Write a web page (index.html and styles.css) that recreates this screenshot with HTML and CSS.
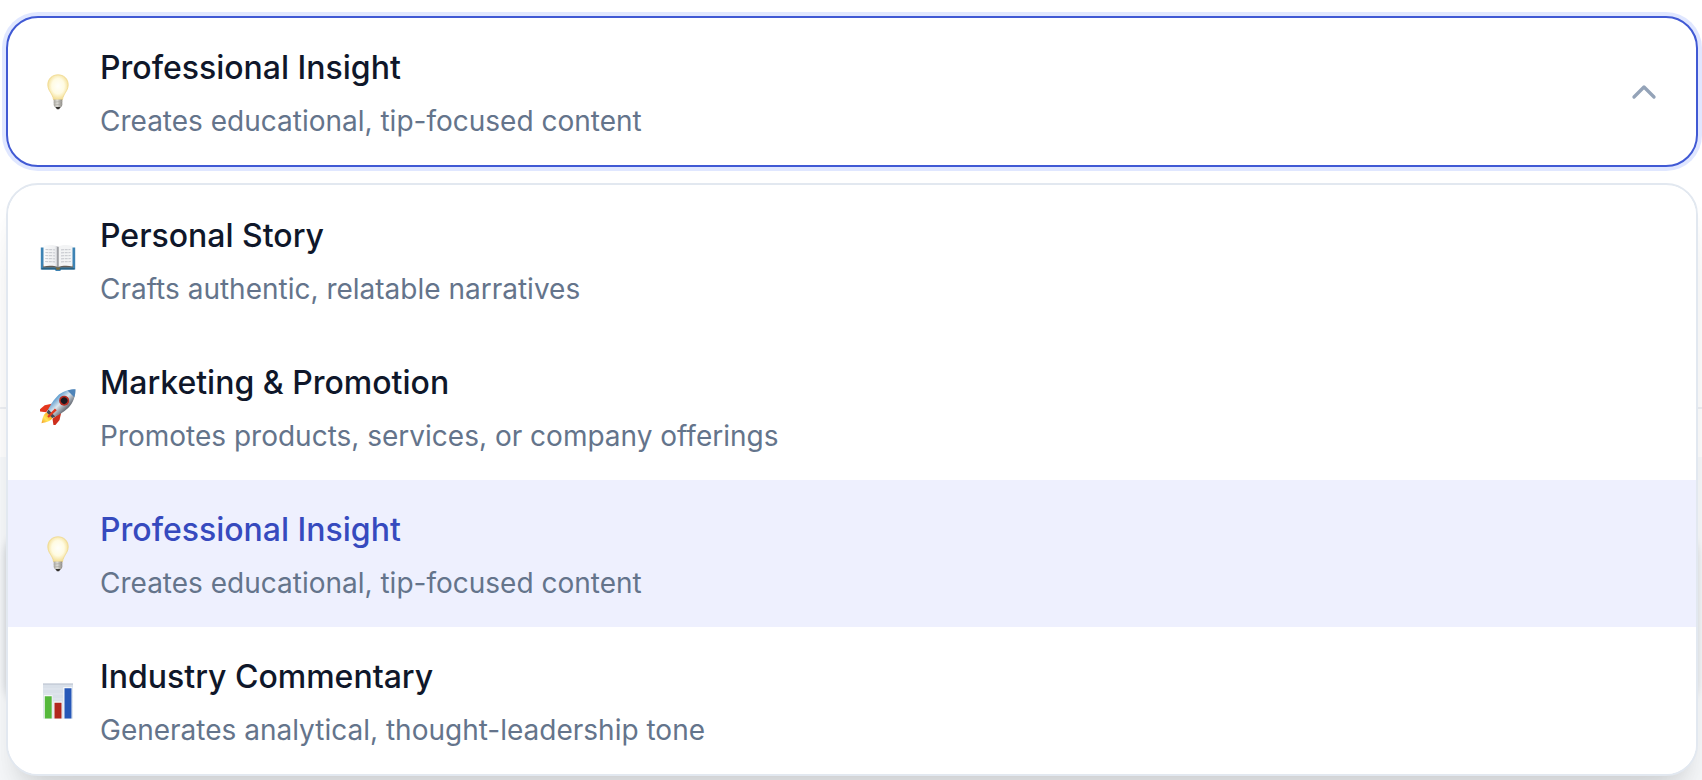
FILE: index.html
```
<!DOCTYPE html>
<html lang="en">
<head>
    <meta charset="UTF-8">
    <meta name="viewport" content="width=device-width, initial-scale=1.0">
    <title>Content Style</title>

    <link rel="stylesheet" href="styles.css">
</head>
<body>
    <!-- Shared emoji icons -->
    <svg class="sprite" aria-hidden="true">
        <defs>
            <radialGradient id="glass" cx="0.5" cy="0.45" r="0.55">
                <stop offset="0" stop-color="#fffffa"/>
                <stop offset="0.55" stop-color="#fffbe2"/>
                <stop offset="1" stop-color="#f3dc8e"/>
            </radialGradient>
            <linearGradient id="screw" x1="0" x2="1" y1="0" y2="0">
                <stop offset="0" stop-color="#a6a39c"/>
                <stop offset="0.4" stop-color="#deddd8"/>
                <stop offset="1" stop-color="#8c8984"/>
            </linearGradient>
            <linearGradient id="page" x1="0" x2="1" y1="0" y2="0">
                <stop offset="0" stop-color="#fbfbfb"/>
                <stop offset="0.8" stop-color="#eeeff1"/>
                <stop offset="1" stop-color="#b9bbc0"/>
            </linearGradient>
            <linearGradient id="hull" x1="0" x2="1" y1="0" y2="0">
                <stop offset="0" stop-color="#5f9ed0"/>
                <stop offset="0.45" stop-color="#dce6ee"/>
                <stop offset="1" stop-color="#60656f"/>
            </linearGradient>
            <linearGradient id="flame" x1="0" x2="0" y1="0" y2="1">
                <stop offset="0" stop-color="#f9a51c"/>
                <stop offset="0.5" stop-color="#ffe85a"/>
                <stop offset="1" stop-color="#f39a25"/>
            </linearGradient>
        </defs>
        <symbol id="icon-bulb" viewBox="0 0 36 36">
            <path d="M18 .8C12 .8 7.8 5 7.8 10.8c0 4.6 2.600 7 4.200 10.200.9 1.800 1.300 3.400 1.600 5h8.800c.3-1.600.7-3.200 1.600-5 1.600-3.200 4.200-5.600 4.200-10.200C28.200 5 24 .8 18 .8z" fill="url(#glass)" stroke="#efd88c" stroke-width="0.8"/>
            <path d="M13.700 25.500h8.600v5.200c0 1.500-1.300 2.500-2.300 3h-4c-1-.5-2.300-1.500-2.300-3z" fill="url(#screw)"/>
            <path d="M13.700 28.200l8.600-.8M13.900 31l8.200-.8" stroke="#aaa7a0" stroke-width="0.600"/>
            <path d="M15.400 33h5.200l-1.500 2.200h-2.200z" fill="#34322f"/>
        </symbol>
        <symbol id="icon-book" viewBox="0 0 36 36">
            <g transform="translate(0 -3)">
                <path d="M.8 8.500h34.400v22H21.200l-1 1.500h-4.400l-1-1.500H.8z" fill="#3d83b4"/>
                <path d="M1.500 29h33v1.500h-33z" fill="#286183"/>
                <path d="M3 28.500h30v-3H3z" fill="#625c55"/>
                <path d="M3.500 7c5-1.500 11-1.500 14.500.700V28c-4-1.600-10-1.700-14.500-.6z" fill="url(#page)"/>
                <path d="M32.500 7c-5-1.500-11-1.500-14.500.700V28c4-1.600 10-1.700 14.500-.6z" fill="#f3f4f5"/>
                <path d="M5.500 10.500l9.500.3M5.400 13.500l9.600.3M5.300 16.500l9.700.3M5.200 19.500l9.800.3M5.100 22.500l9.900.3M21 10.800l9.500-.3M21 13.800l9.600-.3M21 16.800l9.700-.3M21 19.800l9.800-.3M21 22.800l9.900-.3" stroke="#ccced3" stroke-width="1.200" stroke-dasharray="3 .7"/>
                <path d="M18 7.700V28.500" stroke="#85878c" stroke-width="1.200"/>
                <path d="M15.500 28.500h5l-1 2.300h-3z" fill="#79683a"/>
            </g>
        </symbol>
        <symbol id="icon-rocket" viewBox="0 0 36 36">
            <g transform="translate(.5 -.7) rotate(45 18 18)">
                <path d="M12 20L7.500 27l-.8 9 6.800-5z" fill="#e4371d"/>
                <path d="M24 20l4.500 7 .8 9-6.800-5z" fill="#ce2e1c"/>
                <path d="M14 30h8c1.500 4.500-1.500 8-4 12-2.500-4-5.500-7.500-4-12z" fill="url(#flame)"/>
                <path d="M18-6c-5 5-8 11-8 18 0 7 2 13 4 18.500h8c2-5.500 4-11.500 4-18.500 0-7-3-13-8-18z" fill="url(#hull)"/>
                <path d="M18-6c-2 2-3.500 4-4.800 6.500h9.600C21.500-2 20-4 18-6z" fill="#4e84b9"/>
                <circle cx="18" cy="10" r="5" fill="#b72c22"/>
                <circle cx="18" cy="10" r="3.300" fill="#191820"/>
                <path d="M13.200 27.500h9.600l-.9 3.200h-7.800z" fill="#454953"/>
                <path d="M17 22h2.500l-.3 11h-2z" fill="#df3a20"/>
            </g>
        </symbol>
        <symbol id="icon-chart" viewBox="0 0 36 36">
            <path d="M3 .5h30v35H3z" fill="#d9e0e9"/>
            <path d="M3 .5h30v1.200H3z" fill="#c2cad4"/>
            <path d="M3 6h30M3 11h30M3 16h30M3 21h30M3 26h30" stroke="#e5eaf0" stroke-width="0.800"/>
            <path d="M3.800 12h8.700v23.500H3.800zM13.500 18.500h8.700v17h-8.700zM23.300 4h9v31.500h-9z" fill="#f5f7f9"/>
            <path d="M4.800 13.200h6.900v22.300H4.800z" fill="#55b83b"/>
            <path d="M14.500 19.700h7v15.800h-7z" fill="#b2271e"/>
            <path d="M24.500 5.300h7v30.200h-7z" fill="#2758b8"/>
        </symbol>
    </svg>

    <div class="backdrop">
        <div class="backdrop-body">
            <div class="backdrop-card"></div>
        </div>
    </div>

    <main class="select">
        <button type="button" class="trigger" aria-haspopup="listbox" aria-expanded="true" aria-controls="styleMenu">
            <svg class="icon" aria-hidden="true"><use href="#icon-bulb"/></svg>
            <span class="text">
                <span class="title">Professional Insight</span>
                <span class="desc">Creates educational, tip-focused content</span>
            </span>
            <svg class="chevron" viewBox="0 0 24 24" aria-hidden="true"><path d="m18 15-6-6-6 6"/></svg>
        </button>

        <div class="menu" id="styleMenu" role="listbox">
            <button type="button" class="option" role="option" aria-selected="false">
                <svg class="icon" aria-hidden="true"><use href="#icon-book"/></svg>
                <span class="text">
                    <span class="title">Personal Story</span>
                    <span class="desc">Crafts authentic, relatable narratives</span>
                </span>
            </button>
            <button type="button" class="option" role="option" aria-selected="false">
                <svg class="icon" aria-hidden="true"><use href="#icon-rocket"/></svg>
                <span class="text">
                    <span class="title">Marketing &amp; Promotion</span>
                    <span class="desc">Promotes products, services, or company offerings</span>
                </span>
            </button>
            <button type="button" class="option selected" role="option" aria-selected="true">
                <svg class="icon" aria-hidden="true"><use href="#icon-bulb"/></svg>
                <span class="text">
                    <span class="title">Professional Insight</span>
                    <span class="desc">Creates educational, tip-focused content</span>
                </span>
            </button>
            <button type="button" class="option" role="option" aria-selected="false">
                <svg class="icon" aria-hidden="true"><use href="#icon-chart"/></svg>
                <span class="text">
                    <span class="title">Industry Commentary</span>
                    <span class="desc">Generates analytical, thought-leadership tone</span>
                </span>
            </button>
        </div>
    </main>
</body>
</html>
```

FILE: styles.css
```
* {
    box-sizing: border-box;
}

body {
    margin: 0;
    min-height: 100vh;
    background-color: #fff;
    color: #0f172a;
    font-family: Inter, sans-serif;
    overflow: hidden;
}

.sprite {
    position: absolute;
    width: 0;
    height: 0;
}

/* page that the open menu covers */
.backdrop {
    position: absolute;
    inset: 407px 0 0;
    border-top: 2px solid #eef0f4;
    padding-top: 48px;
}

.backdrop-body {
    height: 100%;
    padding: 72px 6px;
    background-color: #f8fafc;
}

.backdrop-card {
    height: 176px;
    border-radius: 24px;
    box-shadow: 0 2px 8px rgba(15, 23, 42, 0.2);
}

.select {
    position: relative;
    padding: 16px 4px 4px 6px;
}

.trigger,
.option {
    display: flex;
    align-items: center;
    gap: 24px;
    width: 100%;
    padding: 20px 32px;
    border: none;
    background-color: #fff;
    color: inherit;
    font-family: inherit;
    text-align: left;
    cursor: pointer;
}

.trigger {
    border: 2px solid #4059d4;
    border-radius: 32px;
    box-shadow: 0 0 0 4px #e0e7ff;
}

.menu {
    margin-top: 16px;
    padding-top: 1px;
    border: 2px solid #e2e8f0;
    border-radius: 32px;
    background-color: #fff;
    box-shadow: 0 40px 50px -10px rgba(0, 0, 0, 0.1), 0 16px 20px -12px rgba(0, 0, 0, 0.1);
    overflow: hidden;
}

.option.selected {
    background-color: #eef0fe;
}

.option.selected .title {
    color: #364abe;
}

.icon {
    flex: none;
    width: 36px;
    height: 36px;
}

.text {
    flex: 1;
    padding-top: 2px;
}

.title,
.desc {
    display: block;
}

.title {
    margin-bottom: 2px;
    font-size: 32px;
    font-weight: 500;
    line-height: 56px;
}

.desc {
    color: #64748b;
    font-size: 28px;
    line-height: 47px;
}

.chevron {
    flex: none;
    width: 40px;
    height: 40px;
    fill: none;
    stroke: #94a3b8;
    stroke-width: 2;
    stroke-linecap: round;
    stroke-linejoin: round;
}
```
